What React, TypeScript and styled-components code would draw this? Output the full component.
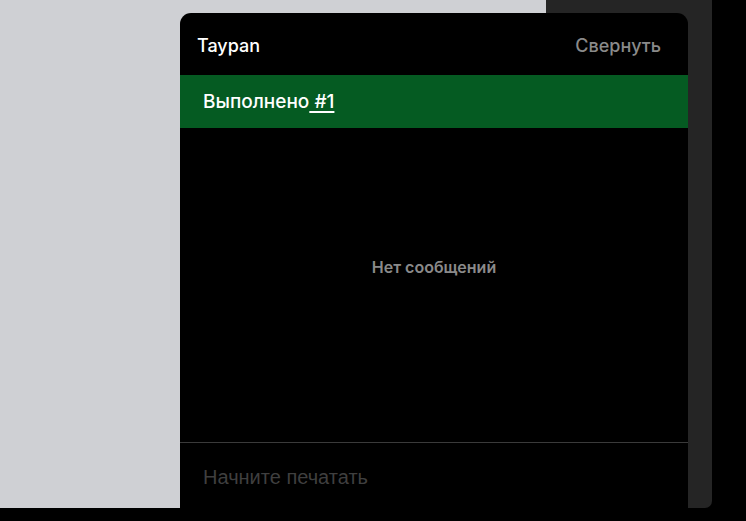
import React from "react";
import styled, { createGlobalStyle } from "styled-components";

const Global = createGlobalStyle`
  html, body { margin: 0; padding: 0; background: #000; }
  body { font-family: Inter, "Noto Sans", sans-serif; }
`;

const Page = styled.div`
  position: relative;
  display: flex;
  width: 712px;
  height: 508px;
`;

const Canvas = styled.div`
  width: 546px;
  background: #cfd0d4;
`;

const Sidebar = styled.div`
  flex: 1;
  background: #252525;
  border-bottom-right-radius: 7px;
`;

const Widget = styled.section`
  position: absolute;
  left: 180px;
  top: 13px;
  width: 508px;
  height: 508px;
  background: #000;
  border-radius: 11px 11px 0 0;
  display: flex;
  flex-direction: column;
  overflow: hidden;
`;

const Header = styled.header`
  height: 62px;
  display: flex;
  align-items: center;
  justify-content: space-between;
  padding: 2px 27px 0 17px;
  box-sizing: border-box;
`;

const Title = styled.span`
  color: #fff;
  font-size: 18px;
  font-weight: 500;
`;

const Collapse = styled.button`
  background: none;
  border: 0;
  padding: 0;
  color: #8a8a8a;
  font-family: inherit;
  font-size: 18px;
  font-weight: 500;
  cursor: pointer;
`;

const Status = styled.div`
  height: 53px;
  background: #055b22;
  display: flex;
  align-items: center;
  padding-left: 23px;
  color: #fff;
  font-size: 19px;
  font-weight: 500;
  white-space: pre;
`;

const Ticket = styled.a`
  color: #fff;
  text-decoration: underline;
  text-underline-offset: 3px;
  text-decoration-thickness: 2px;
`;

const Messages = styled.div`
  flex: 1;
  display: flex;
  align-items: center;
  justify-content: center;
  padding-bottom: 36px;
  color: #8a8a8a;
  font-size: 16px;
  font-weight: 600;
`;

const Composer = styled.div`
  height: 79px;
  border-top: 1px solid #3a3a3a;
  display: flex;
  align-items: center;
  padding: 0 23px 10px;
  box-sizing: border-box;
`;

const Input = styled.input`
  flex: 1;
  background: transparent;
  border: 0;
  outline: none;
  color: #fff;
  font-family: "Liberation Sans", Arial, sans-serif;
  font-size: 20px;
  padding: 0;
  &::placeholder { color: #3f3f3f; }
`;

export default function App() {
  return (
    <>
      <Global />
      <Page>
        <Canvas />
        <Sidebar />
        <Widget>
          <Header>
            <Title>Taypan</Title>
            <Collapse>Свернуть</Collapse>
          </Header>
          <Status>
            Выполнено<Ticket> #1</Ticket>
          </Status>
          <Messages>Нет сообщений</Messages>
          <Composer>
            <Input placeholder="Начните печатать" />
          </Composer>
        </Widget>
      </Page>
    </>
  );
}
